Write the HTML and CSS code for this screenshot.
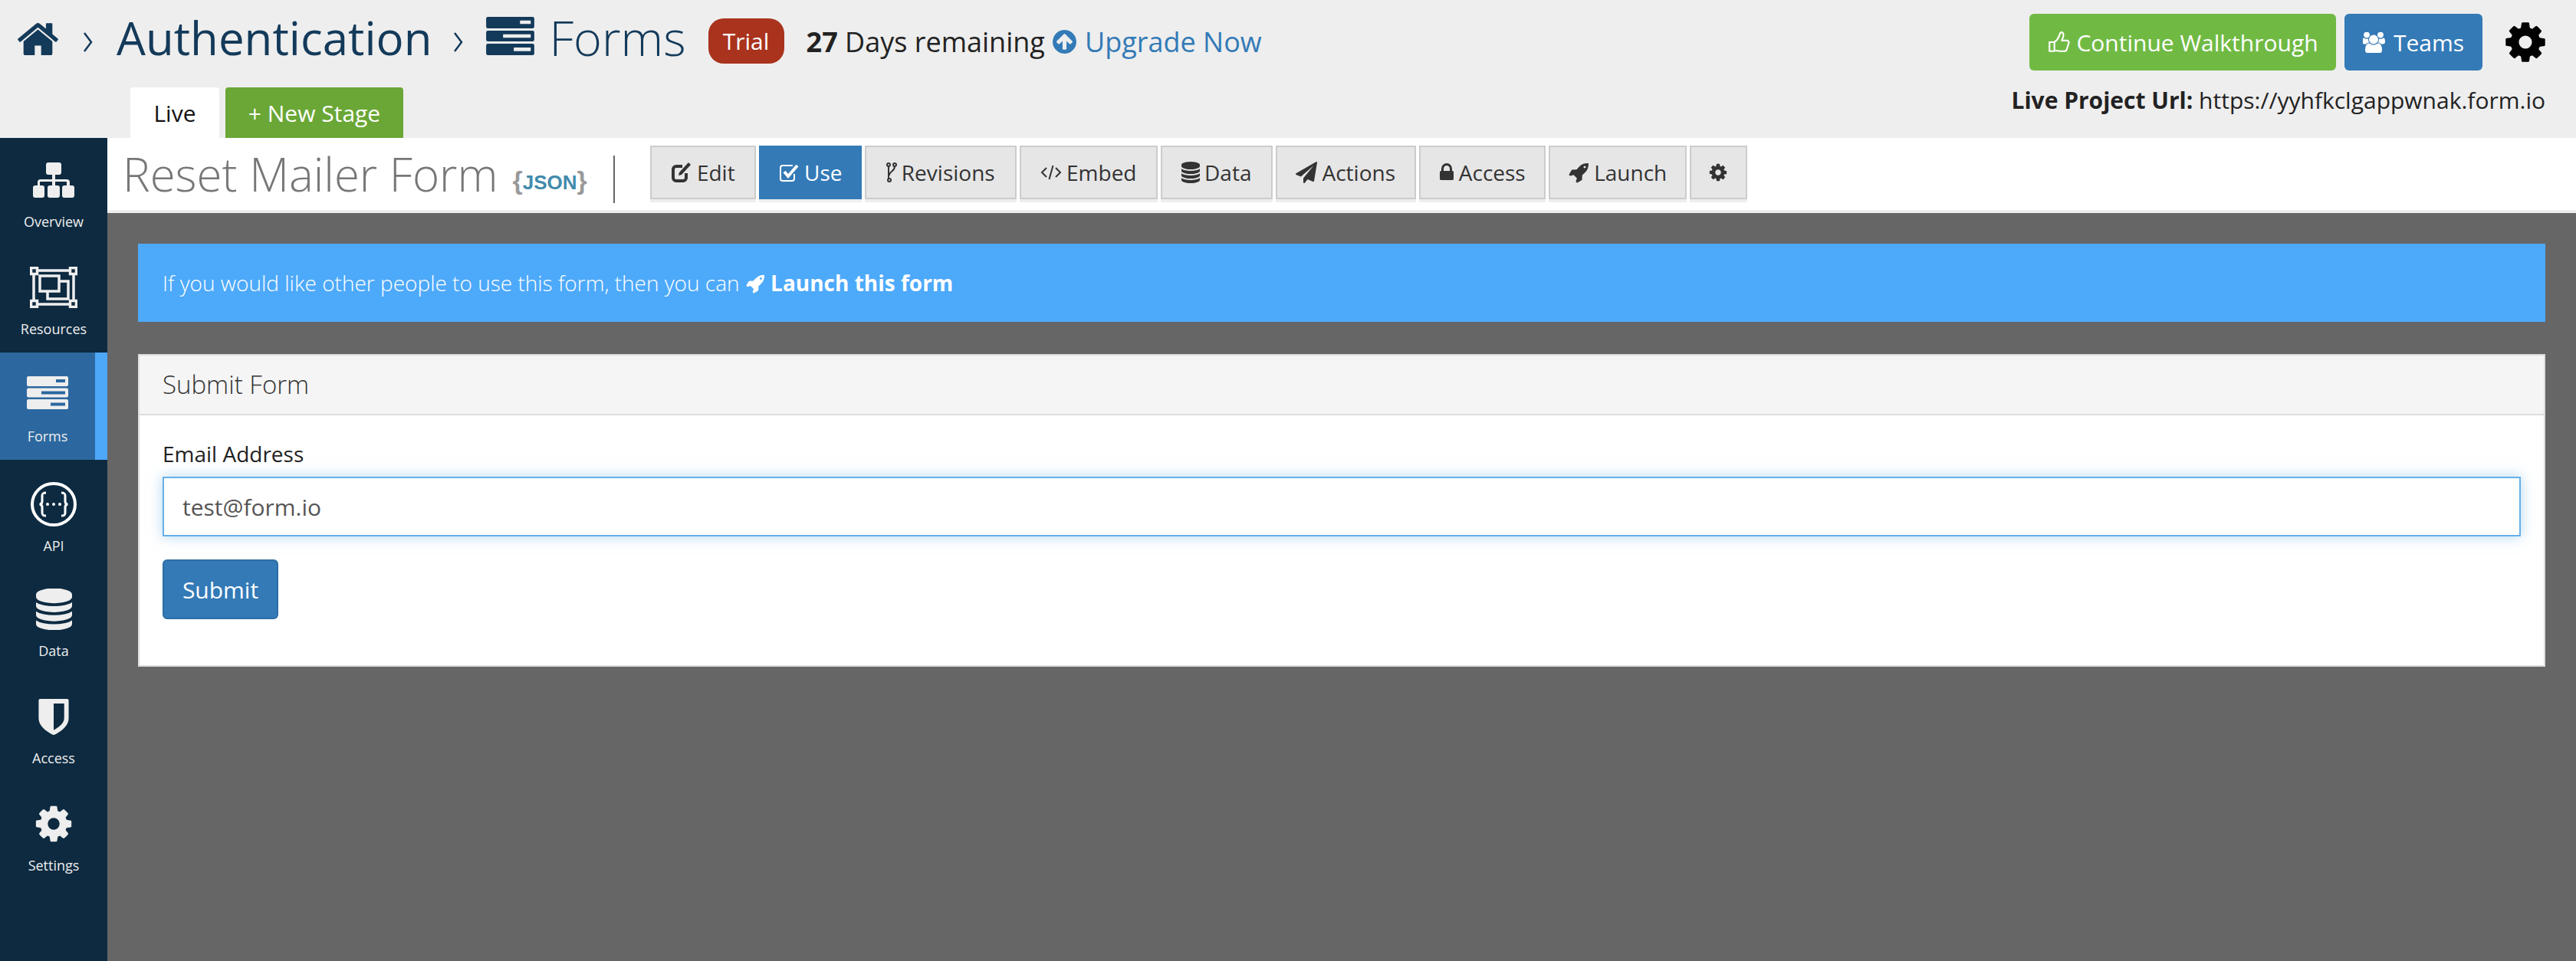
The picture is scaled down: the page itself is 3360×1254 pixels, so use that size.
FILE: index.html
```html
<!DOCTYPE html>
<html lang="en">
<head>
<meta charset="utf-8">
<title>Reset Mailer Form</title>
<link rel="stylesheet" href="styles.css">
</head>
<body>
<svg class="defs" width="0" height="0" aria-hidden="true">
  <defs>
    <symbol id="cog" viewBox="0 0 1792 1792"><path d="M1152 896q0-106-75-181t-181-75-181 75-75 181 75 181 181 75 181-75 75-181zm512-109v222q0 12-8 23t-20 13l-185 28q-19 54-39 91 35 50 107 138 10 12 10 25t-9 23q-27 37-99 108t-94 71q-12 0-26-9l-138-108q-44 23-91 38-16 136-29 186-7 28-36 28h-222q-14 0-24.500-8.500t-11.500-21.500l-28-184q-49-16-90-37l-141 107q-10 9-25 9-14 0-25-11-126-114-165-168-7-10-7-23 0-12 8-23 15-21 51-66.500t54-70.500q-27-50-41-99l-183-27q-13-2-21-12.500t-8-23.500v-222q0-12 8-23t19-13l186-28q14-46 39-92-40-57-107-138-10-12-10-24 0-10 9-23 26-36 98.500-107.500t94.500-71.500q13 0 26 10l138 107q44-23 91-38 16-136 29-186 7-28 36-28h222q14 0 24.500 8.500t11.500 21.500l28 184q49 16 90 37l142-107q9-9 24-9 13 0 25 10 129 119 165 170 7 8 7 22 0 12-8 23-15 21-51 66.500t-54 70.500q26 50 41 98l183 28q13 2 21 12.500t8 23.500z"/></symbol>
    <symbol id="database" viewBox="128 128 1536 1536"><path d="M896 768q237 0 443-43t325-127v170q0 69-103 128t-280 93.500-385 34.500-385-34.500-280-93.500-103-128v-170q119 84 325 127t443 43zm0 768q237 0 443-43t325-127v170q0 69-103 128t-280 93.500-385 34.500-385-34.500-280-93.500-103-128v-170q119 84 325 127t443 43zm0-384q237 0 443-43t325-127v170q0 69-103 128t-280 93.500-385 34.500-385-34.500-280-93.500-103-128v-170q119 84 325 127t443 43zm0-1152q208 0 385 34.500t280 93.500 103 128v128q0 69-103 128t-280 93.500-385 34.500-385-34.500-280-93.500-103-128v-128q0-69 103-128t280-93.500 385-34.500z"/></symbol>
    <symbol id="rocket" viewBox="0 0 1792 1792"><path d="M1504 448q0-40-28-68t-68-28-68 28-28 68 28 68 68 28 68-28 28-68zm224-288q0 249-75.500 430.500t-253.500 360.500q-81 80-195 176l-20 379q-2 16-16 26l-384 224q-7 4-16 4-12 0-23-9l-64-64q-13-14-8-32l85-276-281-281-276 85q-3 1-9 1-14 0-23-9l-64-64q-17-19-5-39l224-384q10-14 26-16l379-20q96-114 176-195 188-187 358-258t431-71q14 0 24 9.500t10 22.500z"/></symbol>
    <symbol id="plane" viewBox="0 0 1792 1792"><path d="M1764 11q33 24 27 64l-256 1536q-5 29-32 45-14 8-31 8-11 0-24-5l-453-185-242 295q-18 23-49 23-13 0-22-4-19-7-30.500-23.500t-11.500-36.500v-349l864-1059-1069 925-395-162q-37-14-40-55-2-40 32-59l1664-960q15-9 32-9 20 0 36 11z"/></symbol>
    <symbol id="lock" viewBox="256 128 1280 1536"><path d="M640 768h512v-192q0-106-75-181t-181-75-181 75-75 181v192zm832 96v576q0 40-28 68t-68 28h-960q-40 0-68-28t-28-68v-576q0-40 28-68t68-28h32v-192q0-184 132-316t316-132 316 132 132 316v192h32q40 0 68 28t28 68z"/></symbol>
    <symbol id="users" viewBox="0 128 2048 1536"><path d="M529 896q-162 5-265 128h-134q-82 0-138-40.500t-56-118.500q0-353 124-353 6 0 43.500 21t97.500 42.500 119 21.500q67 0 133-23-5 37-5 66 0 139 81 256zm1071 637q0 120-73 189.500t-194 69.500h-874q-121 0-194-69.500t-73-189.500q0-53 3.500-103.500t14-109 26.500-108.500 43-97.500 62-81 85.500-53.500 111.500-20q10 0 43 21.500t73 48 107 48 135 21.500 135-21.500 107-48 73-48 43-21.500q61 0 111.500 20t85.500 53.500 62 81 43 97.500 26.500 108.500 14 109 3.500 103.500zm-1024-1277q0 106-75 181t-181 75-181-75-75-181 75-181 181-75 181 75 75 181zm704 384q0 159-112.500 271.500t-271.500 112.500-271.500-112.500-112.500-271.500 112.500-271.500 271.500-112.500 271.500 112.500 112.500 271.500zm576 225q0 78-56 118.500t-138 40.500h-134q-103-123-265-128 81-117 81-256 0-29-5-66 66 23 133 23 59 0 119-21.500t97.500-42.500 43.500-21q124 0 124 353zm-128-609q0 106-75 181t-181 75-181-75-75-181 75-181 181-75 181 75 75 181z"/></symbol>
    <symbol id="forms" viewBox="0 0 54 43"><path fill-rule="evenodd" d="M2 0h50a2 2 0 0 1 2 2v9a2 2 0 0 1-2 2H2a2 2 0 0 1-2-2V2a2 2 0 0 1 2-2zM38 4v4h12V4zM2 15.500h50a2 2 0 0 1 2 2v8a2 2 0 0 1-2 2H2a2 2 0 0 1-2-2v-8a2 2 0 0 1 2-2zM19 19.500v4h31v-4zM2 30h50a2 2 0 0 1 2 2v9a2 2 0 0 1-2 2H2a2 2 0 0 1-2-2v-9a2 2 0 0 1 2-2zM31 34.500v4h19v-4z"/></symbol>
  </defs>
</svg>

<header class="topbar">
  <div class="top-row">
    <nav class="crumbs">
      <svg class="ic-home" viewBox="64 128 1664 1408"><path d="M1472 992v480q0 26-19 45t-45 19h-384v-384h-256v384h-384q-26 0-45-19t-19-45v-480q0-1 .5-3t.5-3l575-474 575 474q1 2 1 6zm223-69l-62 74q-8 9-21 11h-3q-13 0-21-7l-692-577-692 577q-12 8-24 7-13-2-21-11l-62-74q-8-10-7-23.500t11-21.500l719-599q32-26 76-26t76 26l244 204v-195q0-14 9-23t23-9h192q14 0 23 9t9 23v408l219 182q10 8 11 21.500t-7 23.500z"/></svg>
      <svg class="ic-chev" viewBox="0 0 13 26"><path d="M2 1l9 12-9 12"/></svg>
      <span class="crumb-project">Authentication</span>
      <svg class="ic-chev" viewBox="0 0 13 26"><path d="M2 1l9 12-9 12"/></svg>
      <svg class="ic-forms"><use href="#forms"/></svg>
      <span class="crumb-forms">Forms</span>
    </nav>
    <span class="trial">Trial</span>
    <span class="days"><b>27</b> Days remaining</span>
    <a class="upgrade"><svg class="ic-up" viewBox="128 128 1536 1536"><path d="M1412 895q0-27-18-45l-91-91-362-362q-18-18-45-18t-45 18l-362 362-91 91q-18 18-18 45t18 45l91 91q18 18 45 18t45-18l189-189v502q0 26 19 45t45 19h128q26 0 45-19t19-45v-502l189 189q19 19 45 19t45-19l91-91q18-18 18-45zm252 1q0 209-103 385.500t-279.500 279.500-385.500 103-385.500-103-279.500-279.500-103-385.500 103-385.500 279.500-279.500 385.500-103 385.500 103 279.500 279.500 103 385.500z"/></svg>Upgrade Now</a>
    <div class="top-actions">
      <a class="btn-top btn-green"><svg class="ic-thumb" viewBox="0 0 28 28"><path d="M3 14h6v11H3zM9 14c3-2 5-5 6-8 .6-2 1-4 2.500-4 2.500 0 3 3 2 6l-1.500 4h6c2 0 3 1.500 2.500 3l-2.500 8c-.5 1.500-1.500 2-3 2h-6c-2 0-3-1-6-1"/></svg>Continue Walkthrough</a>
      <a class="btn-top btn-blue"><svg class="ic-users"><use href="#users"/></svg>Teams</a>
      <svg class="ic-gear"><use href="#cog"/></svg>
    </div>
  </div>
  <div class="tab-row">
    <a class="tab tab-live">Live</a>
    <a class="tab tab-new">+ New Stage</a>
    <p class="project-url"><b>Live Project Url:</b> https://yyhfkclgappwnak.form.io</p>
  </div>
</header>

<div class="layout">
  <aside class="sidebar">
    <a class="side-item">
      <span class="side-icon"><svg class="si-overview" viewBox="0 0 54 46"><path d="M20 0h14a3 3 0 0 1 3 3v10a3 3 0 0 1-3 3h-5v6h15a4 4 0 0 1 4 4v4h3a3 3 0 0 1 3 3v10a3 3 0 0 1-3 3h-10a3 3 0 0 1-3-3V33a3 3 0 0 1 3-3h3v-4a1 1 0 0 0-1-1H29v5h3a3 3 0 0 1 3 3v10a3 3 0 0 1-3 3H22a3 3 0 0 1-3-3V33a3 3 0 0 1 3-3h3v-5H10a1 1 0 0 0-1 1v4h3a3 3 0 0 1 3 3v10a3 3 0 0 1-3 3H3a3 3 0 0 1-3-3V33a3 3 0 0 1 3-3h3v-4a4 4 0 0 1 4-4h15v-6h-5a3 3 0 0 1-3-3V3a3 3 0 0 1 3-3z"/></svg></span>
      <span class="side-label">Overview</span>
    </a>
    <a class="side-item">
      <span class="side-icon"><svg class="si-resources" viewBox="0 0 62 54"><g class="res-lines"><path d="M5 5h52v44H5z"/><path d="M23 19h27v23H23z"/><path class="res-front" d="M13 12h25v20H13z"/></g><g class="res-nodes"><path d="M1.500 1.500h8v8h-8zM52.500 1.500h8v8h-8zM1.500 44.500h8v8h-8zM52.500 44.500h8v8h-8z"/></g></svg></span>
      <span class="side-label">Resources</span>
    </a>
    <a class="side-item side-active">
      <span class="side-icon"><svg class="si-forms"><use href="#forms"/></svg></span>
      <span class="side-label">Forms</span>
    </a>
    <a class="side-item side-api">
      <span class="side-icon"><svg class="si-api" viewBox="0 0 60 58"><ellipse class="api-ring" cx="30" cy="29" rx="28" ry="27"/><path class="api-brace" d="M20 14c-4 0-5 1-5 4v7c0 2-1 4-3.500 4 2.500 0 3.500 2 3.500 4v7c0 3 1 4 5 4M40 14c4 0 5 1 5 4v7c0 2 1 4 3.500 4-2.500 0-3.500 2-3.500 4v7c0 3-1 4-5 4"/><circle class="api-dot" cx="22" cy="29" r="2"/><circle class="api-dot" cx="30" cy="29" r="2"/><circle class="api-dot" cx="38" cy="29" r="2"/></svg></span>
      <span class="side-label">API</span>
    </a>
    <a class="side-item">
      <span class="side-icon"><svg class="si-data"><use href="#database"/></svg></span>
      <span class="side-label">Data</span>
    </a>
    <a class="side-item">
      <span class="side-icon"><svg class="si-access" viewBox="256 128 1280 1536"><path d="M1344 960v-640h-448v1137q119-63 213-137 235-184 235-360zm192-768v768q0 86-33.500 170.500t-83 150-118 127.500-126.500 103-121 77.500-89.500 49.500-42.500 20q-12 6-26 6t-26-6q-16-7-42.500-20t-89.500-49.500-121-77.500-126.500-103-118-127.500-83-150-33.500-170.500v-768q0-26 19-45t45-19h1152q26 0 45 19t19 45z"/></svg></span>
      <span class="side-label">Access</span>
    </a>
    <a class="side-item">
      <span class="side-icon"><svg class="si-cog"><use href="#cog"/></svg></span>
      <span class="side-label">Settings</span>
    </a>
  </aside>

  <main class="content">
    <div class="title-strip">
      <h1 class="form-title">Reset Mailer Form</h1>
      <span class="json-link"><span class="brace">{</span>JSON<span class="brace">}</span></span>
      <span class="title-sep"></span>
      <nav class="form-tabs">
        <a class="ftab ftab-edit"><svg class="fi" viewBox="0 0 28 28"><path class="fi-stroke" d="M20 15v6a4 4 0 0 1-4 4H7a4 4 0 0 1-4-4V10a4 4 0 0 1 4-4h8"/><path d="M23 1l3 3-12 13-4 1 1-4z"/></svg>Edit</a>
        <a class="ftab ftab-use"><svg class="fi" viewBox="0 0 28 28"><path class="fi-stroke fi-thin" d="M21 16v6a3 3 0 0 1-3 3H6a3 3 0 0 1-3-3V8a3 3 0 0 1 3-3h13"/><path class="fi-stroke" d="M8 13l5 6L25 5"/></svg>Use</a>
        <a class="ftab ftab-rev"><svg class="fi fi-narrow" viewBox="0 0 14 28"><g class="fi-stroke fi-thin"><circle cx="3" cy="4" r="2"/><circle cx="11" cy="4" r="2"/><circle cx="4" cy="24" r="2"/><path d="M3 6v16M11 6c0 7-7 6-7 12"/></g></svg>Revisions</a>
        <a class="ftab ftab-embed"><svg class="fi" viewBox="0 0 28 28"><path class="fi-stroke fi-thin" d="M8 8l-6 6 6 6M20 8l6 6-6 6M16.500 5l-5 18"/></svg>Embed</a>
        <a class="ftab ftab-data"><svg class="fi fi-db"><use href="#database"/></svg>Data</a>
        <a class="ftab ftab-actions"><svg class="fi"><use href="#plane"/></svg>Actions</a>
        <a class="ftab ftab-access"><svg class="fi fi-lock"><use href="#lock"/></svg>Access</a>
        <a class="ftab ftab-launch"><svg class="fi"><use href="#rocket"/></svg>Launch</a>
        <a class="ftab ftab-gear"><svg class="fi fi-gear"><use href="#cog"/></svg></a>
      </nav>
    </div>

    <div class="page">
      <div class="alert">If you would like other people to use this form, then you can <svg class="ic-rocket"><use href="#rocket"/></svg> <b>Launch this form</b></div>
      <section class="panel">
        <h2 class="panel-head">Submit Form</h2>
        <div class="panel-body">
          <label class="field-label" for="email">Email Address</label>
          <input class="field-input" id="email" type="text" value="test@form.io">
          <button class="submit" type="button">Submit</button>
        </div>
      </section>
    </div>
  </main>
</div>
</body>
</html>
```

FILE: styles.css
```css
* { box-sizing: border-box; }
html, body { margin: 0; height: 100%; }
body {
  height: 1254px;
  overflow: hidden;
  display: flex;
  flex-direction: column;
  background: #666;
  color: #222;
  font-family: "Open Sans", "Liberation Sans", sans-serif;
  font-size: 30px;
}
a { text-decoration: none; }
svg { fill: currentColor; flex: none; display: block; }
.defs { position: absolute; }

/* header */
.topbar { height: 180px; flex: none; background: #eee; }
.top-row { height: 114px; display: flex; align-items: center; padding: 0 36px 4px 21px; }
.crumbs { display: flex; align-items: center; margin-top: -12px; color: #143a5a; }
.ic-home { width: 57px; height: 46px; }
.ic-chev { width: 13px; height: 26px; margin-top: 12px; fill: none; stroke: currentColor; stroke-width: 2.500; }
.ic-home + .ic-chev { margin-left: 30px; }
.crumb-project { font-size: 60px; line-height: 80px; margin-left: 31px; margin-right: 28px; }
.ic-forms { width: 63px; height: 50px; margin-left: 30px; margin-top: -4px; }
.crumb-forms { font-size: 63px; font-weight: 300; line-height: 80px; margin-left: 19px; }
.trial { margin: -3px 0 0 29px; width: 99px; height: 59px; background: #a9331c; color: #fff; border-radius: 20px; display: flex; align-items: center; justify-content: center; font-size: 30px; }
.days { margin: -2px 0 0 29px; font-size: 36px; }
.upgrade { display: flex; align-items: center; margin: -2px 0 0 10px; font-size: 36px; color: #337ab7; }
.ic-up { width: 31px; height: 31px; margin-right: 11px; }
.top-actions { margin-left: auto; display: flex; align-items: center; }
.btn-top { height: 74px; display: flex; align-items: center; justify-content: center; border-radius: 6px; color: #fff; font-size: 30px; }
.btn-green { width: 400px; background: #70ba44; }
.btn-blue { width: 180px; background: #337ab7; margin-left: 11px; }
.ic-thumb { width: 30px; height: 30px; margin-right: 8px; fill: none; stroke: #fff; stroke-width: 2; stroke-linejoin: round; }
.ic-users { width: 32px; height: 27px; margin-right: 8px; }
.ic-gear { width: 60px; height: 60px; margin-left: 26px; color: #000; }

.tab-row { height: 66px; display: flex; padding: 0 40px 0 170px; }
.tab { height: 66px; display: flex; align-items: center; justify-content: center; border-radius: 4px 4px 0 0; font-size: 30px; }
.tab-live { width: 116px; background: #fff; color: #111; }
.tab-new { width: 232px; margin-left: 8px; background: #6aa736; color: #fff; }
.project-url { margin: -4px 0 0 auto; font-size: 30px; line-height: 42px; color: #222; }

/* layout */
.layout { flex: 1; display: flex; min-height: 0; }
.sidebar { width: 140px; flex: none; background: #0d2a40; color: #eee; }
.side-item { display: flex; flex-direction: column; align-items: center; height: 140px; padding-top: 25px; color: #eee; }
.side-icon { height: 60px; display: flex; align-items: center; justify-content: center; }
.side-label { font-size: 18px; line-height: 48px; }
.side-active { background: #2c689f; border-right: 16px solid #4da8f9; padding-top: 22px; }
.side-active .side-label { margin-top: 3px; }
.side-api { padding-top: 28px; }
.si-overview { width: 54px; height: 46px; }
.si-resources { width: 62px; height: 54px; }
.res-lines { fill: none; stroke: #eee; stroke-width: 3.500; }
.res-lines .res-front { fill: #0d2a40; }
.res-nodes { fill: #0d2a40; stroke: #eee; stroke-width: 3.500; }
.si-forms { width: 54px; height: 43px; }
.si-api { width: 60px; height: 58px; }
.api-ring, .api-brace { fill: none; stroke: #fff; stroke-width: 4; }
.api-brace { stroke-width: 3; }
.api-dot { fill: #fff; }
.si-data { width: 47px; height: 54px; }
.si-access { width: 40px; height: 47px; }
.si-cog { width: 54px; height: 54px; }

/* main */
.content { flex: 1; min-width: 0; display: flex; flex-direction: column; }
.title-strip { height: 98px; flex: none; display: flex; align-items: flex-start; background: #fff; border-bottom: 4px solid #eee; padding-left: 20px; }
.form-title { margin: 0; font-size: 60px; font-weight: 300; color: #777; line-height: 94px; }
.json-link { margin: 20px 0 0 19px; font: bold 26px/70px "Liberation Sans", sans-serif; color: #428bac; }
.brace { color: #999; font-size: 34px; }
.title-sep { width: 2px; height: 62px; margin: 23px 0 0 34px; background: #666; }
.form-tabs { display: flex; margin: 10px 0 0 46px; gap: 4px; }
.ftab { display: flex; align-items: center; justify-content: center; background: #e6e6e6; border: 2px solid #ccc; box-shadow: 0 4px 0 #eee; margin-bottom: 4px; height: 70px; color: #333; font-size: 28px; }
.ftab-edit { width: 138px; }
.ftab-use { width: 134px; background: #337ab7; border-color: #337ab7; color: #fff; }
.ftab-rev { width: 198px; }
.ftab-embed { width: 180px; }
.ftab-data { width: 146px; }
.ftab-actions { width: 183px; }
.ftab-access { width: 165px; }
.ftab-launch { width: 180px; }
.ftab-gear { width: 75px; }
.fi { width: 28px; height: 28px; margin-right: 6px; }
.fi-narrow { width: 14px; }
.fi-stroke { fill: none; stroke: currentColor; stroke-width: 4; }
.fi-thin { stroke-width: 2; }
.fi-db { width: 24px; }
.fi-lock { width: 20px; height: 24px; }
.fi-gear { width: 26px; height: 26px; margin-right: 0; }

.page { flex: 1; padding: 40px 40px 0; }
.alert { height: 102px; line-height: 102px; padding-left: 32px; background: #4da9fa; color: #fff; font-weight: 300; font-size: 28px; }
.alert b { font-weight: 700; }
.ic-rocket { display: inline-block; vertical-align: -3px; width: 26px; height: 26px; }
.panel { margin-top: 42px; height: 408px; background: #fff; border: 2px solid #ddd; }
.panel-head { margin: 0; height: 78px; padding-left: 30px; background: #f5f5f5; border-bottom: 2px solid #ddd; font-size: 33px; font-weight: 300; line-height: 76px; color: #333; }
.panel-body { padding: 30px 30px 0; }
.field-label { display: block; font-size: 28px; line-height: 40px; color: #222; margin-bottom: 10px; }
.field-input { display: block; width: 100%; height: 78px; padding: 0 24px; border: 2px solid #66afe9; background: #fff; box-shadow: 0 0 16px rgba(102,175,233,.5); font: 30px "Open Sans", sans-serif; color: #555; outline: 0; }
.submit { display: block; margin-top: 30px; width: 151px; height: 78px; padding: 0; background: #337ab7; border: 2px solid #2e6da4; border-radius: 6px; color: #fff; font: 30px "Open Sans", sans-serif; }
```
